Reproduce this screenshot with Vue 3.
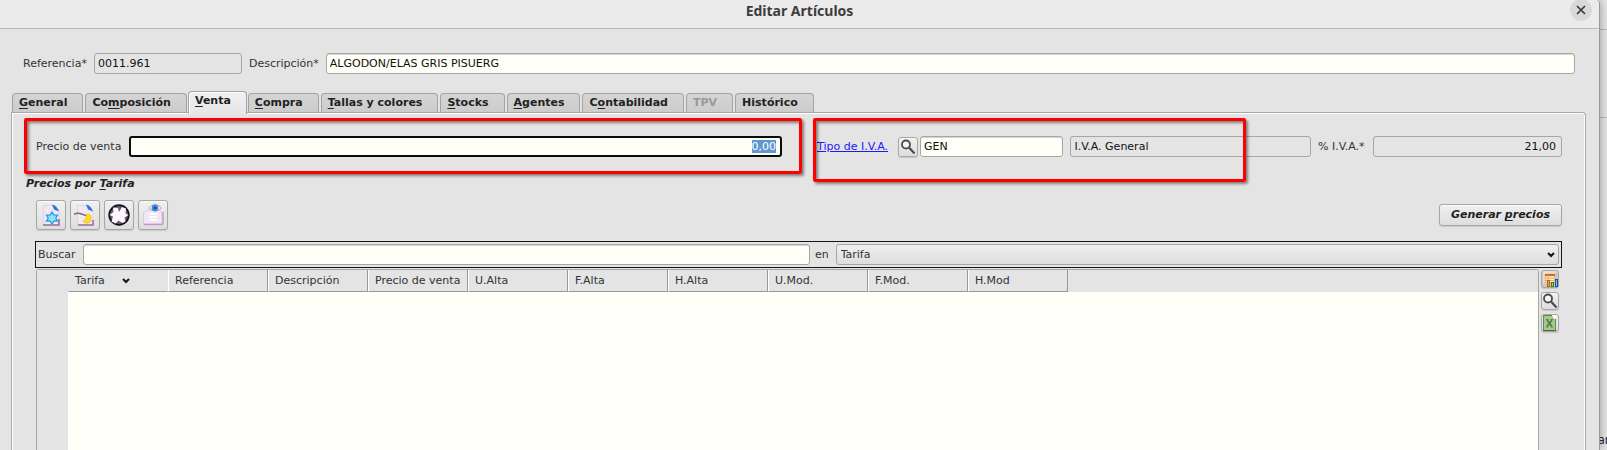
<script setup>
import { ref, onMounted } from 'vue'

const tabs = [
  { key: 'G', post: 'eneral' },
  { pre: 'Co', key: 'm', post: 'posición' },
  { key: 'V', post: 'enta' },
  { key: 'C', post: 'ompra' },
  { key: 'T', post: 'allas y colores' },
  { key: 'S', post: 'tocks' },
  { key: 'A', post: 'gentes' },
  { pre: 'C', key: 'o', post: 'ntabilidad' },
  { pre: 'TPV', disabled: true },
  { pre: 'Histórico' },
]
const active = ref(2)
const columns = ['Tarifa', 'Referencia', 'Descripción', 'Precio de venta', 'U.Alta', 'F.Alta', 'H.Alta', 'U.Mod.', 'F.Mod.', 'H.Mod']

const referencia = ref('0011.961')
const descripcion = ref('ALGODON/ELAS GRIS PISUERG')
const precio = ref('0,00')
const tipoIva = ref('GEN')
const search = ref('')
const priceInput = ref(null)

onMounted(() => {
  priceInput.value.focus()
  priceInput.value.select()
})
</script>

<template>
  <div class="desktop">
    <main class="window">
      <header class="titlebar">
        <h1>Editar Artículos</h1>
        <button class="close" type="button" aria-label="Cerrar">
          <svg width="10" height="10" viewBox="0 0 10 10"><path d="M1 1l8 8M9 1l-8 8" stroke="#3a3a3a" stroke-width="1.7" fill="none" /></svg>
        </button>
      </header>

      <div class="ident">
        <label for="ref">Referencia*</label>
        <input id="ref" v-model="referencia" class="field ref" readonly>
        <label for="desc">Descripción*</label>
        <input id="desc" v-model="descripcion" class="field grow">
      </div>

      <nav class="tabs" role="tablist">
        <button
          v-for="(t, i) in tabs" :key="i" type="button" role="tab" class="tab"
          :class="{ active: i === active }" :disabled="t.disabled" :aria-selected="i === active" @click="active = i"
        >{{ t.pre }}<u v-if="t.key">{{ t.key }}</u>{{ t.post }}</button>
      </nav>

      <section class="panel">
        <div class="sale">
          <div class="price">
            <label for="price">Precio de venta</label>
            <input id="price" ref="priceInput" v-model="precio" class="field focus grow right">
            <span class="mark mark-price"></span>
          </div>
          <div class="vat">
            <a href="#">Tipo de I.V.A.</a>
            <button type="button" class="btn small" aria-label="Buscar tipo de I.V.A.">
              <svg width="16" height="16" viewBox="0 0 16 16"><circle cx="6" cy="5.5" r="4" fill="#f4f4f4" stroke="#4a4a4a" stroke-width="1.8" /><path d="M9 8.5l5.5 6" stroke="#4a4a4a" stroke-width="2.2" fill="none" /></svg>
            </button>
            <input v-model="tipoIva" class="field code" aria-label="Código de I.V.A.">
            <input value="I.V.A. General" class="field vat-name" aria-label="Nombre de I.V.A." readonly>
            <span class="mark mark-vat"></span>
          </div>
          <div class="rate">
            <label for="rate">% I.V.A.*</label>
            <input id="rate" value="21,00" class="field grow right" readonly>
          </div>
        </div>

        <h2>Precios por <u>T</u>arifa</h2>

        <div class="toolbar">
          <button type="button" class="btn tool" aria-label="Nuevo">
            <svg width="22" height="24" viewBox="0 0 22 24">
              <path d="M3.500 2.500H13l6 6V22H3.500z" fill="#f1e8f4" stroke="#e0d3e5" /><path d="M3 22h16V16" fill="none" stroke="#9a6f9f" stroke-width="1.600" />
              <path d="M12 1.500q5 1 7 7l-5-2z" fill="#2f74d8" />
              <path d="M12 9l2 3.200h3.600L15.800 15l1.800 3H14l-2 3-2-3H6.400l1.800-3-1.800-2.800H10z" fill="#8fe0fb" stroke="#2b9fe0" stroke-width="1.300" />
            </svg>
          </button>
          <button type="button" class="btn tool" aria-label="Editar">
            <svg width="22" height="24" viewBox="0 0 22 24">
              <path d="M3.500 2.500H13l6 6V22H3.500z" fill="#f1e8f4" stroke="#e0d3e5" /><path d="M4 22h15V17" fill="none" stroke="#9a6f9f" stroke-width="1.600" />
              <path d="M12 1.500q5 1 7 7l-5-2z" fill="#2f74d8" />
              <path d="M0 11.500q3-2 6-1t6 2" fill="none" stroke="#77736c" stroke-width="1.500" />
              <path d="M12.500 11.500q4-1 4.500 3 .5 5-4 5.500-3 0-4-2 4-1 3.500-6.500z" fill="#ffdc1c" stroke="#ecc314" />
            </svg>
          </button>
          <button type="button" class="btn tool" aria-label="Eliminar">
            <svg width="24" height="24" viewBox="0 0 24 24">
              <circle cx="12" cy="12" r="9.800" fill="#71597a" stroke="#17121a" stroke-width="1.800" />
              <path d="M6 4.500l5 .5 1 4 3-5 4 1.500-.5 5 3 1.500-4 2.500 1 4-3 1.500-4-2.500-3 3-4-2 1.500-5-3.500-1.500 4-3z" fill="#fbf7fd" />
            </svg>
          </button>
          <button type="button" class="btn tool" aria-label="Ver">
            <svg width="24" height="24" viewBox="0 0 24 24">
              <path d="M3.500 9l2-1.500h13L21 9v12H2.500V10z" fill="#f1e6f5" stroke="#dac8e0" />
              <path d="M3 21.500h17.500q1.500 0 1.500-2V9" fill="none" stroke="#bd9ac8" stroke-width="1.400" />
              <path d="M8 11h8M8 14h8M8 17h8" stroke="#fff" stroke-width="1.400" />
              <path d="M7.500 5q6.500-7 13 0-6 5-13 0z" fill="#f7f2f8" stroke="#aaa0ae" stroke-width=".8" />
              <circle cx="14" cy="5" r="3.400" fill="#3c8de0" /><circle cx="14" cy="5" r="1.300" fill="#173f83" />
            </svg>
          </button>
          <button type="button" class="btn generate">Generar <u>p</u>recios</button>
        </div>

        <div class="searchbar">
          <label for="search">Buscar</label>
          <input id="search" v-model="search" class="field query">
          <label for="in">en</label>
          <div class="combo">
            <select id="in"><option>Tarifa</option></select>
            <svg width="8" height="6" viewBox="0 0 8 6"><path d="M1 1l3 3 3-3" stroke="#151515" stroke-width="2" fill="none" /></svg>
          </div>
        </div>

        <div class="results">
          <div class="grid">
            <table>
              <thead>
                <tr>
                  <td class="corner"></td>
                  <th v-for="(c, i) in columns" :key="c" scope="col" :class="{ sorted: i === 0 }">
                    {{ c }}
                    <svg v-if="i === 0" width="8" height="6" viewBox="0 0 8 6"><path d="M1 1l3 3 3-3" stroke="#151515" stroke-width="2" fill="none" /></svg>
                  </th>
                  <td class="rest"></td>
                </tr>
              </thead>
            </table>
          </div>
          <div class="side">
            <button type="button" class="btn mini pressed" aria-label="Gráfico">
              <svg width="16" height="16" viewBox="0 0 16 16">
                <rect x="1" y="1" width="13" height="12" fill="#fff" stroke="#c4c4c4" />
                <rect x="3" y="3" width="10" height="9" fill="#fbe9cf" stroke="#d98a3a" stroke-width=".8" />
                <path d="M3 4h10" stroke="#d2690e" stroke-width="2" /><path d="M3 7h10M3 9.500h10M6 3v9" stroke="#e0a04a" stroke-width=".8" />
                <rect x="5.500" y="9.500" width="2" height="6" fill="#f6a04b" stroke="#ce5c00" /><rect x="9.500" y="11.500" width="2" height="4" fill="#9ee05a" stroke="#3d7a05" /><rect x="13.500" y="8.500" width="2" height="7" fill="#88b8ee" stroke="#174f9c" />
              </svg>
            </button>
            <button type="button" class="btn mini" aria-label="Buscar">
              <svg width="16" height="16" viewBox="0 0 16 16"><circle cx="6" cy="5.500" r="4" fill="#f4f4f4" stroke="#4a4a4a" stroke-width="1.800" /><path d="M9 8.500l5.500 6" stroke="#4a4a4a" stroke-width="2.200" fill="none" /></svg>
            </button>
            <button type="button" class="btn mini" aria-label="Exportar a Excel">
              <svg width="16" height="16" viewBox="0 0 16 16">
                <path d="M1.500.5h9l3 3v12h-12z" fill="#a3c98c" stroke="#5c8a4a" /><path d="M1.500 15.500h12" stroke="#3f6b31" /><path d="M10 0h4v4q-3 0-4-4z" fill="#fff" />
                <path d="M5 5l5 6.500M10 5l-5 6.500" stroke="#4d7443" stroke-width="1.500" fill="none" /><path d="M4 4.500h2.500M8.500 4.500H11M4 12h2.500M8.500 12H11" stroke="#4d7443" stroke-width=".8" />
              </svg>
            </button>
          </div>
        </div>
      </section>
    </main>
    <aside class="behind"><span>ar</span></aside>
  </div>
</template>

<style>
body { margin: 0; }
</style>

<style scoped>
.desktop { display: flex; height: 100vh; min-height: 360px; overflow: hidden; background: #e4e4e4; font: 11px/14px "DejaVu Sans", sans-serif; color: #333; }
.desktop * { box-sizing: border-box; }
.window { position: relative; flex: 1; min-width: 0; display: flex; flex-direction: column; border-right: 1px solid #999; border-top-right-radius: 4px; background: #e4e4e4; box-shadow: 0 0 8px rgba(0, 0, 0, .35); }
.titlebar { position: relative; flex: none; height: 29px; border-bottom: 1px solid #b9b9b9; background: #ebebeb; border-top-right-radius: 4px; text-align: center; }
h1 { margin: 0; font: bold 14px/22px "Noto Sans", sans-serif; color: #3d3d3d; }
.close { position: absolute; right: 7px; top: -1px; width: 22px; height: 22px; padding: 0; border: 0; border-radius: 50%; background: #d9d9d9; display: grid; place-items: center; }
.ident { display: flex; align-items: center; padding: 24px 24px 0 23px; }
.ident label { margin-right: 7px; }
.field { height: 21px; min-width: 0; padding: 0 3px; border: 1px solid #a6a6a6; border-radius: 3px; background: #fffff7; box-shadow: inset 0 1px 0 #d4d4d0; font: inherit; color: #111; outline: none; }
.field[readonly] { background: #e4e4e4; box-shadow: none; }
.field::selection { background: #5f97d1; color: #fff; }
.grow { flex: 1; }
.right { text-align: right; padding-right: 5px; }
.focus { border: 2px solid #0b0b0b; box-shadow: none; padding-right: 4px; }
.ref { width: 148px; margin-right: 7px; }
.tabs { display: flex; align-items: flex-end; gap: 2px; margin: 17px 12px 0; height: 22px; }
.tab { flex: none; height: 20px; padding: 0 15px 1px 6px; border: 1px solid #a3a3a3; border-bottom: 0; border-radius: 4px 4px 0 0; background: linear-gradient(#d5d5d5, #cbcbcb); font: bold 11px/14px "DejaVu Sans", sans-serif; color: #222; }
.tab:disabled { color: #999; }
.tab.active { position: relative; z-index: 1; height: 23px; margin: 0 -1px -1px; padding-bottom: 5px; background: linear-gradient(#f1f1f1, #e6e6e6); box-shadow: inset 1px 1px 0 #fff; }
u { text-underline-offset: 2px; }
.panel { flex: 1; min-height: 0; display: flex; flex-direction: column; margin: -1px 13px 0 11px; padding: 23px 23px 0 24px; border: 1px solid #a8a8a8; border-bottom: 0; border-radius: 0 4px 0 0; box-shadow: inset 1px 1px 0 #fff, inset -1px 0 0 #fff; }
.sale { display: flex; }
.price, .vat, .rate { position: relative; display: flex; align-items: center; }
.price { flex: 746 1 0; margin-right: 35px; }
.vat { flex: 494 1 0; margin-right: 7px; }
.rate { flex: 244 1 0; }
.price label, .rate label { margin-right: 8px; }
.vat a { color: #1a1aff; margin-right: 10px; white-space: nowrap; }
.mark { position: absolute; border: 3px solid #f00; border-radius: 2px; box-shadow: 2px 2px 3px rgba(0, 0, 0, .45), inset 2px 2px 3px rgba(0, 0, 0, .45); pointer-events: none; }
.mark-price { inset: -18px -20px -17px -12px; }
.mark-vat { inset: -18px 65px -25px -4px; }
.btn { flex: none; display: grid; place-items: center; padding: 0; border: 1px solid #a6a6a6; border-radius: 3px; background: linear-gradient(#f0f0f0, #dedede); box-shadow: inset 0 1px 0 #fafafa, 0 1px 1px #c9c9c9; color: #222; }
.small { width: 20px; height: 20px; margin-right: 2px; }
.code { flex: 142 1 0; margin-right: 7px; }
.vat-name { flex: 244 1 0; }
h2 { margin: 20px 0 0 -10px; font: italic bold 11px/14px "DejaVu Sans", sans-serif; color: #222; }
.toolbar { display: flex; align-items: center; gap: 4px; margin-top: 9px; }
.tool { width: 30px; height: 30px; }
.generate { display: block; margin-left: auto; height: 22px; padding: 0 11px; font: italic bold 11px/14px "DejaVu Sans", sans-serif; }
.searchbar { flex: none; display: flex; align-items: center; height: 27px; margin: 11px 0 0 -1px; padding: 0 2px; border: 1px solid #151515; }
.query { flex: 720 1 0; margin: 0 5px 0 7px; }
.combo { position: relative; flex: 724 1 0; display: flex; margin-left: 7px; }
.combo svg { position: absolute; right: 4px; top: 8px; pointer-events: none; }
select { flex: 1; height: 21px; padding: 0 4px; appearance: none; border: 1px solid #a6a6a6; border-radius: 3px; background: linear-gradient(#efefef, #dedede); font: inherit; color: #333; outline: none; }
.results { flex: 1; display: flex; gap: 2px; min-height: 0; margin-top: 1px; }
.grid { flex: 1; min-width: 0; border: 1px solid #a6a6a6; border-bottom: 0; border-radius: 3px 3px 0 0; background: linear-gradient(90deg, #e4e4e4 31px, #fffff7 31px); }
table { width: 100%; table-layout: fixed; border-collapse: separate; border-spacing: 0; }
tr { height: 22px; }
th, td { padding: 0; background: #e4e4e4; }
th { width: 100px; padding: 1px 0 0 6px; border-left: 1px solid #fff; border-right: 1px solid #999; border-bottom: 1px solid #999; font-weight: normal; text-align: left; white-space: nowrap; }
.sorted { border-left-color: #e4e4e4; border-right-color: #e4e4e4; }
.sorted svg { margin-left: 14px; }
.corner { width: 31px; }
.side { display: flex; flex-direction: column; gap: 4px; margin: 1px 3px 0 0; }
.mini { width: 18px; height: 18px; }
.pressed { background: #c9c9c9; }
.behind { flex: none; width: 7px; padding-top: 433px; background: linear-gradient(#b9b9b9, #b9b9b9) 0 29px / 100% 1px no-repeat, linear-gradient(#b9b9b9, #b9b9b9) 0 117px / 100% 1px no-repeat; color: #222; font: 12px/14px "Noto Sans", sans-serif; }
.behind span { display: block; margin-left: -2px; }
</style>
